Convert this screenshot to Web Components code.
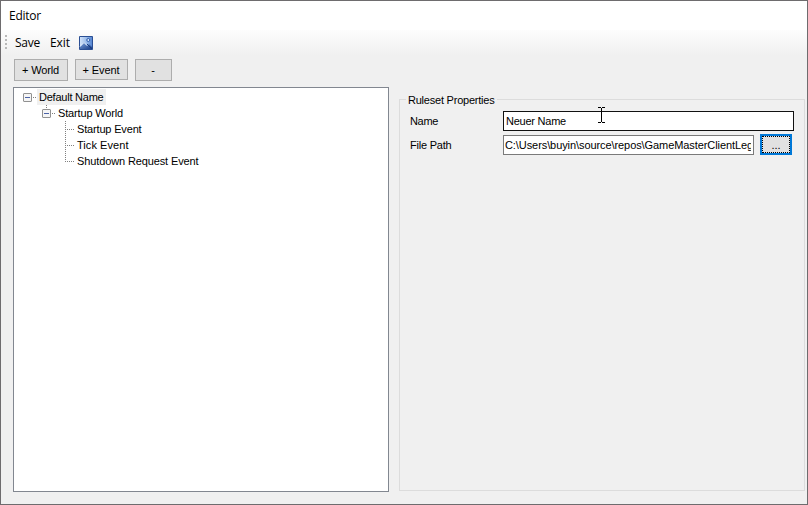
<!DOCTYPE html>
<html lang="de"><head><meta charset="utf-8"><title>Editor</title>
<style>html,body{margin:0;width:808px;height:505px;overflow:hidden}</style></head>
<body><editor-window></editor-window>
<script>
const define=(name,html,setup)=>customElements.define(name,class extends HTMLElement{
  connectedCallback(){
    if(this.shadowRoot)return;
    const t=document.createElement('template');t.innerHTML=html;
    this.attachShadow({mode:'open'}).append(t.content.cloneNode(true));
    if(setup)setup.call(this,this.shadowRoot);
  }
});
// Label whose letter spacing is tuned so that its text spans the given width
define('ui-text',`<style>:host{display:inline-block;white-space:pre;line-height:16px}span{display:inline-block}</style><span></span>`,function(r){
  const s=r.querySelector('span'),t=this.getAttribute('text'),w=+this.getAttribute('w');
  s.textContent=t;
  if(w&&t.length>1){
    const d=(w-s.getBoundingClientRect().width)/t.length;
    s.style.letterSpacing=d+'px';
  }
});
define('ui-button',`<style>
:host{display:flex;box-sizing:border-box;width:var(--w);height:var(--h,23px);border:1px solid #adadad;background:#e1e1e1;align-items:center;justify-content:center}
:host([focused]){border:2px solid #0078d7;padding:0}
div{display:flex;align-items:center;justify-content:center;width:100%;height:100%;box-sizing:border-box;padding-right:1px}
:host([focused]) div{border:1px dotted #000;padding-right:0}
</style><div><slot></slot></div>`);
define('ui-field',`<style>:host{display:flex;box-sizing:border-box;width:var(--w);height:var(--h,21px);border:1px solid var(--b,#7a7a7a);background:#fff;padding:1px 2px 0 var(--p,1px)}
div{overflow:hidden;width:100%;height:17px}</style><div><slot></slot></div>`);
define('tool-bar',`<style>
:host{display:flex;box-sizing:border-box;height:25px;padding:0 0 0 4px;background:linear-gradient(#fdfdfd,#f0f0f0);font:12px "Open Sans","Noto Sans",sans-serif}
.grip{width:2px;height:14px;margin:5px 8px 0 0;background:repeating-linear-gradient(#b8b8b8 0 2px,transparent 2px 4px)}
.save{margin:5px 10px 0 0;width:25px}.exit{margin:5px 9px 0 0;width:20px}svg{margin-top:6px}
</style><div class="grip"></div><ui-text class="save" text="Save" w="25"></ui-text><ui-text class="exit" text="Exit" w="20"></ui-text>
<svg width="14" height="14" viewBox="0 0 14 14"><defs><linearGradient id="g" x2="1" y2="0"><stop stop-color="#d5e5fa"/><stop offset=".5" stop-color="#9fbfec"/><stop offset="1" stop-color="#4f80cf"/></linearGradient><linearGradient id="m" x2="1" y2="1"><stop stop-color="#7ea3dd"/><stop offset="1" stop-color="#173c86"/></linearGradient></defs>
<path fill="url(#g)" stroke="#2b4f94" d="M.5.5h13v13H.5z"/><path fill="url(#m)" d="M1 11 5 6l3 4 2-2 3 3v2H1z"/><path fill="none" stroke="#eef6ff" d="m1 10.5 4-4 3 3"/><path fill="none" stroke="#193b7d" d="m8 8 5 5"/><circle cx="9.3" cy="4" r="1.5" fill="#dceaff" stroke="#2d5cab"/></svg>`);
define('tree-node',`<style>
:host{display:flex;height:16px;align-items:stretch}
svg{display:block}
.label{padding-left:2px;box-sizing:border-box;height:16px}
:host([selected]) .label{background:#f0f0f0;width:69px}
</style><svg height="16"><g></g></svg><div class="label"><slot></slot></div>`,function(r){
  const level=+this.getAttribute('level'),x=13+level*19,svg=r.querySelector('svg');
  svg.setAttribute('width',x+10);
  const c='stroke="#808080" stroke-dasharray="1 1" fill="none"';
  let out='';
  if(level<2){
    out=`<path ${c} d="M${x+6} 8.5h4"/>`;
    if(level===1)out+=`<path ${c} d="M${x+.5} 0v4"/>`;
    out+=`<rect x="${x-3.5}" y="4.5" width="8" height="8" rx=".5" fill="#f5f5f5" stroke="#919191"/><path stroke="#4b63a7" d="M${x-2} 8.5h5"/>`;
  }else out=`<path ${c} d="M${x+.5} 0v${this.hasAttribute('last')?9:16}M${x+2} 8.5h8"/>`;
  svg.querySelector('g').innerHTML=out;
});
define('tree-view',`<style>:host{display:block;box-sizing:border-box;border:1px solid #828790;background:#fff;padding-top:1px}</style>
<tree-node level="0" selected><ui-text text="Default Name" w="64.5"></ui-text></tree-node>
<tree-node level="1"><ui-text text="Startup World" w="65"></ui-text></tree-node>
<tree-node level="2"><ui-text text="Startup Event" w="64.5"></ui-text></tree-node>
<tree-node level="2"><ui-text text="Tick Event" w="51.5"></ui-text></tree-node>
<tree-node level="2" last><ui-text text="Shutdown Request Event" w="121.5"></ui-text></tree-node>`);
define('property-group',`<style>
:host{display:block}
fieldset{box-sizing:border-box;width:406px;height:400px;border:1px solid #dcdcdc;margin:0;padding:4px 0 0 10px;min-width:0}
legend{padding:0 2px;margin-left:-4px;height:16px;width:87px}
legend ui-text{padding-top:1px}
.row{display:grid;grid-template-columns:93px auto auto;justify-content:start;height:24px}
.row>ui-text{padding-top:2px}
ui-button{margin:-1px 0 0 6px}
</style><fieldset><legend><ui-text text="Ruleset Properties" w="86.5"></ui-text></legend>
<div class="row"><ui-text text="Name" w="28"></ui-text><ui-field style="--w:291px;--h:20px;--b:#111;--p:2px"><ui-text text="Neuer Name" w="60"></ui-text></ui-field></div>
<div class="row"><ui-text text="File Path" w="41.5"></ui-text><ui-field style="--w:251px;--h:20px"><ui-text text="C:\\Users\\buyin\\source\\repos\\GameMasterClientLegacy" w="265"></ui-text></ui-field><ui-button focused style="--w:32px;--h:21px"><ui-text text="..." w="9"></ui-text></ui-button></div>
</fieldset>`);
define('editor-window',`<style>
:host{display:flex;flex-direction:column;position:relative;box-sizing:border-box;width:808px;height:505px;border:1px solid #6e6c6e;background:#f0f0f0;color:#000;font:11px "Liberation Sans",Arial,sans-serif}
header{height:29px;box-sizing:border-box;padding:6px 0 0 8px;background:#fff;font:12px "Open Sans","Noto Sans",sans-serif}
nav{display:flex;gap:7px;padding:4px 0 0 13px;height:24px;align-items:flex-start}
main{display:flex;padding-left:12px;gap:10px;height:417px}
tree-view{width:376px;height:405px;margin-top:4px}
property-group{margin-top:8px}
.cursor{position:absolute;left:596px;top:106px}
</style>
<header><ui-text text="Editor" w="32"></ui-text></header><tool-bar></tool-bar>
<nav><ui-button style="--w:54px;--h:22px"><ui-text text="+ World" w="37"></ui-text></ui-button><ui-button style="--w:53px;--h:21px"><ui-text text="+ Event" w="37"></ui-text></ui-button><ui-button style="--w:37px;--h:22px"><ui-text text="-"></ui-text></ui-button></nav>
<main><tree-view></tree-view><property-group></property-group></main>
<svg class="cursor" width="8" height="16" viewBox="0 0 8 16" shape-rendering="crispEdges"><path fill="none" stroke="#000" d="M1 .5h3M5 .5h3M1 15.5h3M5 15.5h3M4.5 1v14"/></svg>`);
</script></body></html>
